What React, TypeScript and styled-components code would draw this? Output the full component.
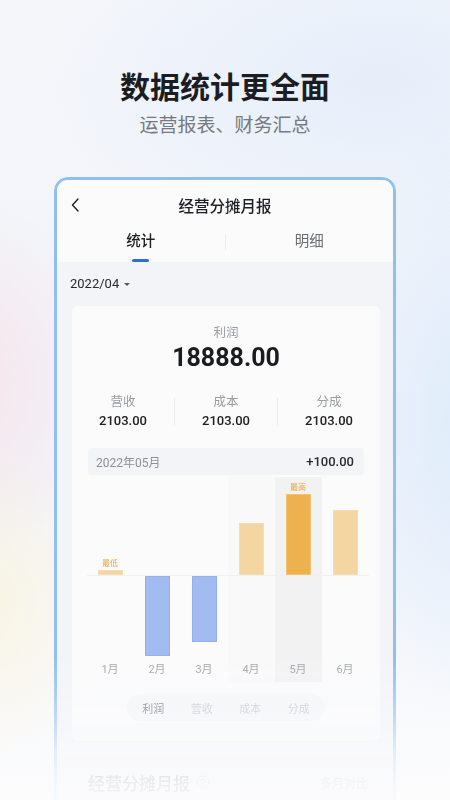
import React from 'react'
import styled, { createGlobalStyle } from 'styled-components'

const GlobalStyle = createGlobalStyle`
  html, body {
    margin: 0;
    padding: 0;
  }
  body {
    font-family: Roboto, "Noto Sans CJK SC", sans-serif;
    color: #222;
  }
`

const Page = styled.div`
  width: 450px;
  height: 800px;
  overflow: hidden;
  display: flex;
  flex-direction: column;
  align-items: center;
  background:
    radial-gradient(ellipse 220px 260px at -40px 380px, rgba(246, 226, 232, 0.9), transparent 70%),
    radial-gradient(ellipse 220px 240px at -30px 600px, rgba(250, 244, 222, 0.9), transparent 70%),
    radial-gradient(ellipse 260px 420px at 500px 420px, rgba(220, 234, 251, 1), transparent 75%),
    radial-gradient(ellipse 420px 220px at 380px 80px, rgba(230, 238, 250, 1), transparent 80%),
    linear-gradient(180deg, #f4f6fa 0%, #f1f4fa 60%, #fcfcfd 100%);
`

const Title = styled.h1`
  margin: 68px 0 0;
  font-size: 30px;
  line-height: 40px;
  font-weight: 700;
  color: #1b1d22;
`

const Subtitle = styled.p`
  margin: 5px 0 0;
  font-size: 19px;
  line-height: 26px;
  color: #777a80;
`

const Frame = styled.div`
  margin-top: 38px;
  width: 336px;
  min-height: 680px;
  flex-shrink: 0;
  border: 3px solid #8fc0f0;
  border-radius: 14px;
  overflow: hidden;
  background: #f3f4f8;
  -webkit-mask-image: linear-gradient(180deg, #000 0, #000 480px, rgba(0, 0, 0, 0.6) 535px, rgba(0, 0, 0, 0.2) 578px, rgba(0, 0, 0, 0.07) 605px, rgba(0, 0, 0, 0.04) 640px);
  mask-image: linear-gradient(180deg, #000 0, #000 480px, rgba(0, 0, 0, 0.6) 535px, rgba(0, 0, 0, 0.2) 578px, rgba(0, 0, 0, 0.07) 605px, rgba(0, 0, 0, 0.04) 640px);
`

const Header = styled.div`
  background: #fbfbfc;
`

const NavBar = styled.div`
  height: 50px;
  display: flex;
  align-items: center;
  justify-content: center;
  position: relative;
`

const BackButton = styled.span`
  position: absolute;
  left: 14px;
  top: 18px;
  display: flex;
`

const NavTitle = styled.div`
  font-size: 15.5px;
  font-weight: 500;
  color: #1e1f24;
`

const Tabs = styled.div`
  display: flex;
  height: 32px;
  align-items: flex-start;
`

const Tab = styled.div<{ $active?: boolean }>`
  flex: 1;
  display: flex;
  flex-direction: column;
  align-items: center;
  font-size: 14.5px;
  line-height: 24px;
  font-weight: ${({ $active }) => ($active ? 500 : 400)};
  color: ${({ $active }) => ($active ? '#1e1f24' : '#6a6c72')};
  &::after {
    content: '';
    margin-top: 5px;
    width: 17px;
    height: 3px;
    border-radius: 2px;
    background: ${({ $active }) => ($active ? '#2e6bdb' : 'transparent')};
  }
`

const TabDivider = styled.div`
  width: 1px;
  height: 16px;
  margin-top: 4px;
  background: #ededf0;
`

const Body = styled.div`
  padding: 12px 13px 0 15px;
`

const MonthPicker = styled.div`
  display: flex;
  align-items: center;
  gap: 5px;
  margin-left: -2px;
  font-size: 13px;
  line-height: 20px;
  color: #2a2b30;
`

const Caret = styled.span`
  width: 0;
  height: 0;
  border-left: 3px solid transparent;
  border-right: 3px solid transparent;
  border-top: 3.5px solid #555;
`

const Card = styled.div`
  margin-top: 12px;
  background: #fbfbfc;
  border-radius: 6px;
  padding: 18px 0 20px;
  display: flex;
  flex-direction: column;
  align-items: center;
`

const Label = styled.div`
  font-size: 12.5px;
  line-height: 18px;
  color: #9a9ca2;
`

const Profit = styled.div`
  font-size: 25px;
  line-height: 30px;
  font-weight: 700;
  color: #1b1c20;
  margin-top: 1px;
`

const Stats = styled.div`
  margin-top: 20px;
  width: 100%;
  display: grid;
  grid-template-columns: 1fr 1px 1fr 1px 1fr;
  align-items: center;
`

const Stat = styled.div`
  display: flex;
  flex-direction: column;
  align-items: center;
`

const StatValue = styled.div`
  font-size: 13px;
  line-height: 19px;
  font-weight: 500;
  color: #202126;
`

const StatDivider = styled.div`
  height: 27px;
  background: #ececef;
`

const MonthRow = styled.div`
  margin: 18px 0 0;
  width: 276px;
  height: 27px;
  padding: 0 10px 0 8px;
  box-sizing: border-box;
  display: flex;
  justify-content: space-between;
  align-items: center;
  background: #f3f4f7;
  border-radius: 3px;
  font-size: 12px;
  color: #8e9096;
`

const MonthDelta = styled.span`
  font-size: 13px;
  font-weight: 500;
  color: #2a2b30;
`

const Chart = styled.div`
  margin: 2px 0 0 3px;
  display: flex;
`

const Column = styled.div<{ $shade: number }>`
  width: 47px;
  display: flex;
  flex-direction: column;
  align-items: center;
  background: ${({ $shade }) => `rgba(0, 0, 0, ${$shade})`};
`

const Upper = styled.div`
  height: 98px;
  width: 100%;
  display: flex;
  flex-direction: column;
  justify-content: flex-end;
  align-items: center;
  border-bottom: 1px solid #f0f0f2;
`

const Lower = styled.div`
  height: 82px;
  width: 100%;
  display: flex;
  justify-content: center;
`

const Tag = styled.div`
  font-size: 8px;
  line-height: 10px;
  color: #e6a443;
  margin-bottom: 1px;
`

const Bar = styled.div<{ $tone: 'light' | 'strong' | 'blue' }>`
  width: 25px;
  box-sizing: border-box;
  background: ${({ $tone }) => ($tone === 'strong' ? '#eeb14f' : $tone === 'blue' ? '#a2bcf2' : '#f4d6a2')};
  border: 1px solid ${({ $tone }) => ($tone === 'strong' ? '#f6c46e' : $tone === 'blue' ? '#93b0ee' : '#f6dcb0')};
`

const MonthLabel = styled.div`
  margin-top: 4px;
  font-size: 11px;
  line-height: 16px;
  color: #a2a4aa;
  padding-bottom: 4px;
`

const Legend = styled.div`
  margin-top: 12px;
  display: flex;
  padding: 0 2px;
  height: 27px;
  align-items: center;
  background: #f5f6f8;
  border-radius: 14px;
`

const LegendItem = styled.div<{ $active?: boolean }>`
  width: 48.5px;
  text-align: center;
  font-size: 11px;
  color: ${({ $active }) => ($active ? '#6d6f75' : '#c4c6cb')};
`

const Section = styled.div`
  margin-top: 30px;
  display: flex;
  justify-content: space-between;
  align-items: center;
  padding: 0 12px 0 16px;
  height: 22px;
`

const SectionTitle = styled.div`
  display: flex;
  align-items: center;
  gap: 6px;
  font-size: 17px;
  font-weight: 500;
  color: #2a2b30;
`

const SectionLink = styled.div`
  font-size: 12px;
  color: #8e9096;
`

type BarData = { month: string; value: number; tag?: string; strong?: boolean; shade: number }

const bars: BarData[] = [
  { month: '1月', value: 5, tag: '最低', shade: 0 },
  { month: '2月', value: -80, shade: 0 },
  { month: '3月', value: -66, shade: 0 },
  { month: '4月', value: 52, shade: 0.006 },
  { month: '5月', value: 81, tag: '最高', strong: true, shade: 0.035 },
  { month: '6月', value: 65, shade: 0 },
]

const ChevronLeft = () => (
  <svg width="8" height="14" viewBox="0 0 8 14" fill="none">
    <polyline points="7,1 1.5,7 7,13" stroke="#222" strokeWidth="1.4" strokeLinecap="round" strokeLinejoin="round" />
  </svg>
)

const InfoIcon = () => (
  <svg width="14" height="14" viewBox="0 0 14 14" fill="none">
    <circle cx="7" cy="7" r="6" stroke="#9a9ca2" strokeWidth="1" />
    <path d="M5.3 5.4a1.7 1.7 0 1 1 2.4 1.5c-.5.3-.7.6-.7 1.1" stroke="#9a9ca2" strokeWidth="1" strokeLinecap="round" />
    <circle cx="7" cy="10.2" r="0.6" fill="#9a9ca2" />
  </svg>
)

export default function App() {
  return (
    <Page>
      <GlobalStyle />
      <Title>数据统计更全面</Title>
      <Subtitle>运营报表、财务汇总</Subtitle>
      <Frame>
        <Header>
          <NavBar>
            <BackButton>
              <ChevronLeft />
            </BackButton>
            <NavTitle>经营分摊月报</NavTitle>
          </NavBar>
          <Tabs>
            <Tab $active>统计</Tab>
            <TabDivider />
            <Tab>明细</Tab>
          </Tabs>
        </Header>
        <Body>
          <MonthPicker>
            2022/04
            <Caret />
          </MonthPicker>
          <Card>
            <Label>利润</Label>
            <Profit>18888.00</Profit>
            <Stats>
              <Stat>
                <Label>营收</Label>
                <StatValue>2103.00</StatValue>
              </Stat>
              <StatDivider />
              <Stat>
                <Label>成本</Label>
                <StatValue>2103.00</StatValue>
              </Stat>
              <StatDivider />
              <Stat>
                <Label>分成</Label>
                <StatValue>2103.00</StatValue>
              </Stat>
            </Stats>
            <MonthRow>
              <span>2022年05月</span>
              <MonthDelta>+100.00</MonthDelta>
            </MonthRow>
            <Chart>
              {bars.map((b) => (
                <Column key={b.month} $shade={b.shade}>
                  <Upper>
                    {b.tag && <Tag>{b.tag}</Tag>}
                    {b.value > 0 && (
                      <Bar $tone={b.strong ? 'strong' : 'light'} style={{ height: b.value }} />
                    )}
                  </Upper>
                  <Lower>
                    {b.value < 0 && <Bar $tone="blue" style={{ height: -b.value }} />}
                  </Lower>
                  <MonthLabel>{b.month}</MonthLabel>
                </Column>
              ))}
            </Chart>
            <Legend>
              <LegendItem $active>利润</LegendItem>
              <LegendItem>营收</LegendItem>
              <LegendItem>成本</LegendItem>
              <LegendItem>分成</LegendItem>
            </Legend>
          </Card>
          <Section>
            <SectionTitle>
              经营分摊月报
              <InfoIcon />
            </SectionTitle>
            <SectionLink>多月对比</SectionLink>
          </Section>
        </Body>
      </Frame>
    </Page>
  )
}
